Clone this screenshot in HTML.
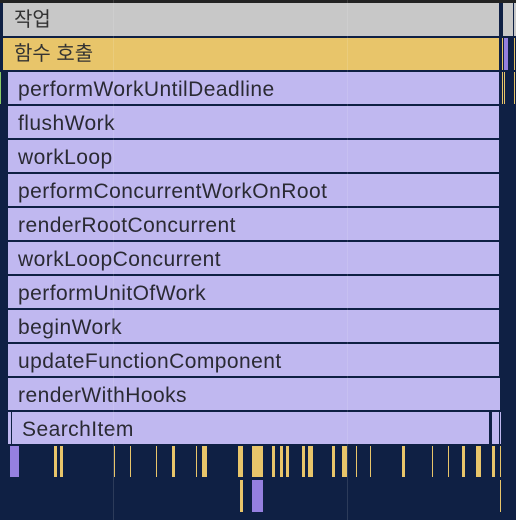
<!DOCTYPE html><html><head><style>
body{margin:0;width:516px;height:520px;background:#0f2044;position:relative;overflow:hidden;font-family:"Liberation Sans","Noto Sans CJK KR",sans-serif}
div{position:absolute}
.r{left:8px;width:491px;height:32px;background:#c0b8f0;color:#2a2a33;font-size:21px;letter-spacing:0.45px;line-height:35px;padding-left:10px;box-sizing:border-box;white-space:nowrap}
.b{top:446px;height:31px;background:#e8c56a}
</style></head><body>
<div style="left:0;top:0;width:516px;height:3px;background:#222"></div>
<div style="left:3px;top:3px;width:496px;height:33px;background:#c8c8c8;color:#333;font-size:20px;line-height:34px;padding-left:11px;box-sizing:border-box">작업</div>
<div style="left:503px;top:3px;width:10px;height:33px;background:#c8c8c8"></div>
<div style="left:514px;top:3px;width:2px;height:33px;background:#c8c8c8"></div>
<div style="left:3px;top:38px;width:496px;height:32px;background:#e8c56a;color:#333;font-size:20px;line-height:33px;padding-left:11px;box-sizing:border-box">함수 호출</div>
<div style="left:0;top:72px;width:1px;height:32px;background:#8c6"></div>
<div style="left:502px;top:38px;width:1px;height:32px;background:#e8c56a"></div>
<div style="left:504px;top:38px;width:4px;height:32px;background:#9580e0"></div>
<div style="left:514px;top:38px;width:1px;height:32px;background:#e8c56a"></div>
<div style="left:502px;top:72px;width:1px;height:32px;background:#e8c56a"></div>
<div style="left:504px;top:72px;width:1px;height:32px;background:#e8c56a"></div>
<div style="left:514px;top:72px;width:1px;height:32px;background:#e8c56a"></div>
<div class="r" style="top:72px">performWorkUntilDeadline</div>
<div class="r" style="top:106px">flushWork</div>
<div class="r" style="top:140px">workLoop</div>
<div class="r" style="top:174px">performConcurrentWorkOnRoot</div>
<div class="r" style="top:208px">renderRootConcurrent</div>
<div class="r" style="top:242px">workLoopConcurrent</div>
<div class="r" style="top:276px">performUnitOfWork</div>
<div class="r" style="top:310px">beginWork</div>
<div class="r" style="top:344px">updateFunctionComponent</div>
<div class="r" style="top:378px;width:492px">renderWithHooks</div>
<div class="r" style="top:412px;width:481px;padding-left:14px">SearchItem</div>
<div style="left:11px;top:412px;width:1px;height:32px;background:#0f2044"></div>
<div style="left:492px;top:412px;width:7px;height:32px;background:#c0b8f0"></div>
<div style="left:500px;top:412px;width:1px;height:32px;background:#c0b8f0"></div>
<div class="b" style="left:10px;width:9px;background:#9580e0"></div>
<div class="b" style="left:54px;width:3px"></div><div class="b" style="left:60px;width:3px"></div>
<div class="b" style="left:114px;width:1px"></div><div class="b" style="left:130px;width:1px"></div>
<div class="b" style="left:156px;width:1px"></div><div class="b" style="left:172px;width:3px"></div>
<div class="b" style="left:196px;width:1px"></div><div class="b" style="left:202px;width:5px"></div>
<div class="b" style="left:238px;width:5px"></div><div class="b" style="left:252px;width:11px"></div>
<div class="b" style="left:272px;width:3px"></div><div class="b" style="left:280px;width:3px"></div>
<div class="b" style="left:286px;width:3px"></div><div class="b" style="left:302px;width:3px"></div>
<div class="b" style="left:308px;width:5px"></div><div class="b" style="left:332px;width:3px"></div>
<div class="b" style="left:342px;width:5px"></div><div class="b" style="left:356px;width:1px"></div>
<div class="b" style="left:370px;width:1px"></div><div class="b" style="left:402px;width:3px"></div>
<div class="b" style="left:432px;width:1px"></div><div class="b" style="left:448px;width:1px"></div>
<div class="b" style="left:462px;width:3px"></div><div class="b" style="left:476px;width:5px"></div>
<div class="b" style="left:492px;width:3px"></div><div class="b" style="left:500px;width:1px"></div>
<div class="b" style="top:480px;height:32px;left:240px;width:3px"></div>
<div class="b" style="top:480px;height:32px;left:252px;width:11px;background:#9580e0"></div>
<div class="b" style="top:480px;height:32px;left:500px;width:1px"></div>
<div style="left:113px;top:0;width:1px;height:520px;background:rgba(255,255,255,.12)"></div>
<div style="left:347px;top:0;width:1px;height:520px;background:rgba(255,255,255,.12)"></div>
</body></html>
